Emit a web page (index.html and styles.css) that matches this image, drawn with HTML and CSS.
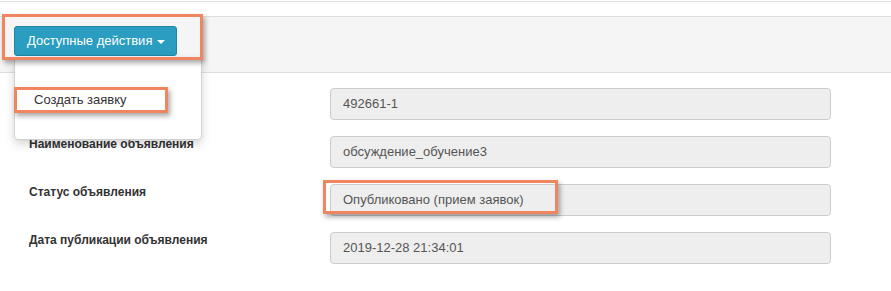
FILE: index.html
```html
<!DOCTYPE html>
<html lang="ru">
<head>
  <meta charset="UTF-8" />
  <title>Объявление</title>
  <link rel="stylesheet" href="styles.css">
</head>
<body>

<div class="page">
  <div class="rule"></div>

  <div class="toolbar">
    <div class="dropdown">
      <button class="btn-actions">Доступные действия <span class="caret"></span></button>
      <span class="mark mark-btn"></span>
      <ul class="menu">
        <li class="menu-item">Создать заявку</li>
        <span class="mark mark-item"></span>
      </ul>
    </div>
  </div>

  <div class="form">
    <div class="row">
      <label class="label"></label>
      <div class="field"><div class="input">492661-1</div></div>
    </div>
    <div class="row">
      <label class="label">Наименование объявления</label>
      <div class="field"><div class="input">обсуждение_обучение3</div></div>
    </div>
    <div class="row">
      <label class="label">Статус объявления</label>
      <div class="field">
        <div class="input">Опубликовано (прием заявок)</div>
        <span class="mark mark-status"></span>
      </div>
    </div>
    <div class="row">
      <label class="label">Дата публикации объявления</label>
      <div class="field"><div class="input">2019-12-28 21:34:01</div></div>
    </div>
  </div>
</div>

</body>
</html>
```

FILE: styles.css
```css
* {
  box-sizing: border-box;
}

body {
  margin: 0;
  font-family: "Liberation Sans", Arial, sans-serif;
  color: #333;
  background: #fff;
}

.page {
  padding-top: 1px;
}

.rule {
  height: 1px;
  background: #e2e2e2;
  margin-bottom: 14px;
}

.toolbar {
  height: 57px;
  background: #f5f5f5;
  border-top: 1px solid #dedede;
  border-bottom: 1px solid #dedede;
  padding: 9px 14px 0;
}

.dropdown {
  position: relative;
  display: inline-block;
}

.btn-actions {
  display: block;
  height: 30px;
  padding: 0 11px 0 12px;
  font-family: inherit;
  font-size: 13px;
  line-height: 28px;
  color: #fff;
  background: #2a9dc0;
  border: 1px solid #1f86a6;
  border-radius: 3px;
}

.caret {
  display: inline-block;
  width: 0;
  height: 0;
  margin-left: 1px;
  vertical-align: middle;
  border-top: 4px solid #fff;
  border-left: 4px solid transparent;
  border-right: 4px solid transparent;
}

.menu {
  position: absolute;
  top: 31px;
  left: 0;
  width: 188px;
  height: 83px;
  margin: 0;
  padding: 30px 0 0;
  list-style: none;
  background: #fff;
  border: 1px solid #d0d0d0;
  border-radius: 4px;
  box-shadow: 0 4px 10px rgba(0, 0, 0, 0.17);
  z-index: 5;
}

.menu-item {
  padding: 1px 19px;
  font-size: 13px;
  line-height: 22px;
  color: #333;
}

.mark {
  position: absolute;
  border: 3px solid #f0865f;
  box-shadow: 2px 3px 5px rgba(0, 0, 0, 0.35);
  pointer-events: none;
}

.mark-btn {
  left: -12px;
  top: -12px;
  width: 201px;
  height: 46px;
  z-index: 6;
}

.mark-item {
  left: -1px;
  top: 29px;
  width: 154px;
  height: 26px;
}

.mark-status {
  left: -7px;
  top: -4px;
  width: 235px;
  height: 34px;
}

.form {
  padding-top: 15px;
}

.row {
  display: flex;
  margin-bottom: 16px;
}

.label {
  width: 330px;
  padding-left: 29px;
  font-size: 12px;
  font-weight: bold;
  line-height: 16px;
}

.field {
  position: relative;
  width: 501px;
}

.input {
  height: 32px;
  padding: 0 12px;
  font-size: 13px;
  line-height: 30px;
  color: #555;
  background: #eee;
  border: 1px solid #ccc;
  border-radius: 4px;
}
```
